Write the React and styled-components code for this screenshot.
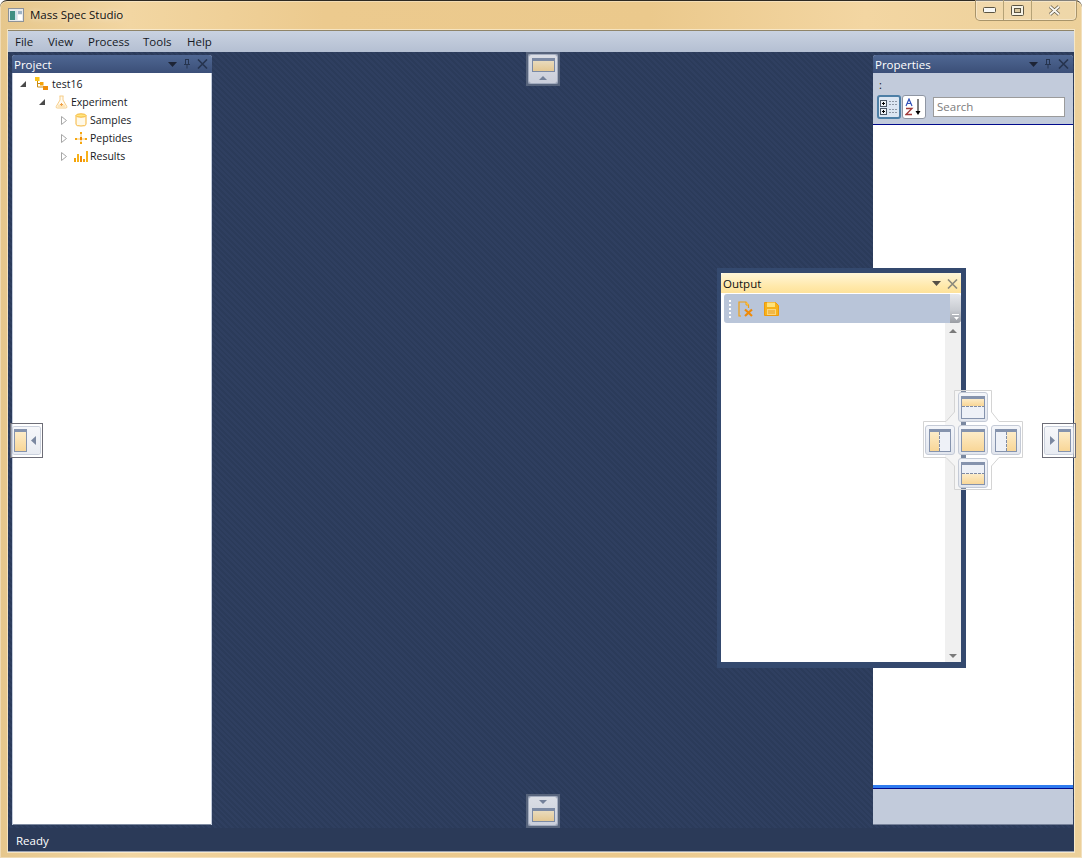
import React from 'react';
import styled, { createGlobalStyle } from 'styled-components';

const GlobalStyle = createGlobalStyle`
  html, body {
    margin: 0;
    padding: 0;
    background: #fff;
    overflow: hidden;
  }
  * { box-sizing: border-box; }
`;

const UI_FONT = `"Open Sans", "Noto Sans", "Liberation Sans", sans-serif`;

// Window chrome
const Window = styled.div`
  width: 1082px;
  height: 858px;
  display: flex;
  flex-direction: column;
  padding: 0 8px 6px;
  border-top: 1px solid #2e2a22;
  border-radius: 7px 7px 0 0;
  background: linear-gradient(90deg, #e6c78c 0%, #f2d6a2 12%, #ecca8e 30%, #ebc98c 60%, #f3d6a2 80%, #ecd09a 100%);
  font-family: ${UI_FONT};
  font-size: 11.5px;
  color: #1a1a1a;
  box-shadow: inset 0 0 0 1px rgba(255, 255, 255, 0.35);
`;

const TitleBar = styled.div`
  height: 29px;
  flex: none;
  display: flex;
  align-items: flex-start;
  justify-content: space-between;
`;

const TitleLeft = styled.div`
  display: flex;
  align-items: center;
  gap: 6px;
  height: 29px;
  padding-bottom: 2px;
`;

const TitleText = styled.span`
  font-size: 11.5px;
  color: #101010;
  text-shadow: 0 0 6px rgba(255, 255, 255, 0.8);
`;

const CaptionGroup = styled.div`
  display: flex;
  height: 21px;
  margin-right: -3px;
  margin-top: -1px;
  border: 1px solid #a8946a;
  border-top: none;
  border-radius: 0 0 5px 5px;
  background: rgba(255, 255, 255, 0.15);
  box-shadow: inset 0 0 0 1px rgba(255, 255, 255, 0.3);
`;

const CaptionButton = styled.div`
  width: ${(props) => props.$w}px;
  display: flex;
  align-items: center;
  justify-content: center;
  border-left: ${(props) => (props.$first ? 'none' : '1px solid #b5a277')};
`;

const Client = styled.div`
  flex: 1;
  min-height: 0;
  display: flex;
  flex-direction: column;
  border-top: 1px solid #8f8468;
  box-shadow: 0 0 0 1px rgba(255, 250, 235, 0.55);
`;

const MenuBar = styled.div`
  height: 21px;
  flex: none;
  display: flex;
  align-items: center;
  padding-left: 7px;
  background: linear-gradient(180deg, #c9d2e1 0%, #b4bfd2 100%);
`;

const MenuItem = styled.span`
  font-size: 11.5px;
  color: #15181f;
  width: ${(props) => props.$w}px;
`;

const DockArea = styled.div`
  position: relative;
  flex: 1;
  min-height: 0;
  display: flex;
  justify-content: space-between;
  padding: 3px 1px 3px 4px;
  background-color: #2b3b5a;
  background-image: repeating-linear-gradient(45deg, #2b3b5a 0, #2b3b5a 2px, #2f3f60 2px, #2f3f60 4px);
`;

const StatusBar = styled.div`
  height: 24px;
  flex: none;
  display: flex;
  align-items: center;
  padding: 2px 0 0 8px;
  background: #2b3a58;
  color: #fff;
  font-size: 11.5px;
  border-bottom: 1px solid #9aa3b4;
`;

// Docked panels
const Panel = styled.section`
  width: 200px;
  display: flex;
  flex-direction: column;
  border-radius: 3px 3px 0 0;
  overflow: hidden;
  background: #c2cbdb;
`;

const PanelHeader = styled.header`
  height: 18px;
  flex: none;
  display: flex;
  align-items: center;
  justify-content: space-between;
  padding: 0 4px 0 2px;
  color: #fff;
  font-size: 11.5px;
  background: linear-gradient(180deg, #4f6793 0%, #3b4f78 100%);
`;

const HeaderTools = styled.div`
  display: flex;
  align-items: center;
  gap: 6px;
`;

const TreeBody = styled.div`
  flex: 1;
  background: #fff;
  margin: 0 1px 0 1px;
  border-bottom: 1px solid #7f8ba1;
  padding-top: 2px;
`;

const TreeRow = styled.div`
  height: 18px;
  display: flex;
  align-items: center;
  padding-left: ${(props) => props.$indent}px;
  font-size: 10.5px;
  color: #16181d;
`;

const Expander = styled.span`
  width: 6px;
  height: 8px;
  display: flex;
  align-items: center;
  margin-right: ${(props) => props.$gap}px;
`;

const TreeIcon = styled.span`
  width: 14px;
  height: 14px;
  display: flex;
  align-items: center;
  justify-content: center;
  margin-right: ${(props) => props.$gap ?? 3}px;
`;

const PropsTop = styled.div`
  height: 52px;
  flex: none;
  padding: 3px 4px 0;
  display: flex;
  flex-direction: column;
  border-bottom: 1px solid #000a8c;
`;

const Colon = styled.div`
  height: 17px;
  padding-left: 2px;
  font-size: 11px;
  color: #111;
  line-height: 17px;
`;

const PropsTools = styled.div`
  display: flex;
  align-items: center;
  margin-top: 2px;
`;

const ToggleButton = styled.div`
  width: 24px;
  height: 24px;
  display: flex;
  align-items: center;
  justify-content: center;
  margin-right: 1px;
  border-radius: 3px;
  background: ${(props) => (props.$active ? '#dce6f2' : '#fff')};
  border: ${(props) => (props.$active ? '2px solid #4d7fa6' : '1px solid #8f96a3')};
`;

const SearchBox = styled.div`
  width: 132px;
  height: 20px;
  margin-left: 6px;
  display: flex;
  align-items: center;
  padding: 0 0 2px 3px;
  background: #fff;
  border: 1px solid #9b9b9b;
  color: #7c7c7c;
  font-size: 11.5px;
`;

const PropsGrid = styled.div`
  flex: 1;
  background: #fff;
`;

const PropsHelp = styled.div`
  height: 40px;
  flex: none;
  border-top: 3px solid #2f7cf0;
  border-bottom: 1px solid #76829a;
  box-shadow: inset 0 1px 0 #000a8c;
  background: #c2cbdb;
`;

// Floating output window
const FloatWindow = styled.div`
  position: absolute;
  left: 709px;
  top: 216px;
  width: 249px;
  height: 400px;
  display: flex;
  flex-direction: column;
  border-style: solid;
  border-color: #34496e;
  border-width: 5px 5px 6px 4px;
  background: #fff;
`;

const FloatHeader = styled.header`
  height: 20px;
  flex: none;
  display: flex;
  align-items: center;
  justify-content: space-between;
  padding: 1px 3px 0 2px;
  font-size: 11.5px;
  color: #111;
  border-radius: 3px 3px 0 0;
  background: linear-gradient(180deg, #fff6d8 0%, #ffe8a8 70%, #fee29a 100%);
`;

const ToolbarRow = styled.div`
  height: 30px;
  flex: none;
  display: flex;
  padding: 1px 0 0 3px;
`;

const OutputToolbar = styled.div`
  flex: 1;
  display: flex;
  align-items: center;
  gap: 10px;
  padding-left: 5px;
  background: #b9c5d9;
  border-radius: 3px 0 0 3px;
`;

const Grip = styled.span`
  width: 2px;
  height: 18px;
  background: repeating-linear-gradient(180deg, #fff 0, #fff 2px, transparent 2px, transparent 4px);
  margin-right: -3px;
`;

const OverflowTab = styled.div`
  width: 11px;
  display: flex;
  align-items: flex-end;
  justify-content: center;
  padding-bottom: 3px;
  border-radius: 0 3px 3px 0;
  background: linear-gradient(180deg, #e6e8ec 0%, #c9ccd2 55%, #9a9da3 100%);
`;

const OutputBody = styled.div`
  flex: 1;
  min-height: 0;
  display: flex;
  justify-content: flex-end;
`;

const ScrollTrack = styled.div`
  width: 16px;
  display: flex;
  flex-direction: column;
  align-items: center;
  justify-content: space-between;
  padding: 6px 0 4px;
  background: #f0f0f0;
`;

// Dock guides
const SideGuide = styled.div`
  position: absolute;
  display: flex;
  align-items: center;
  justify-content: center;
  left: ${(props) => props.$left}px;
  top: ${(props) => props.$top}px;
  width: ${(props) => props.$w}px;
  height: ${(props) => props.$h}px;
  border: ${(props) => (props.$dark ? '2px solid #5c6980' : '1px solid #6d6d77')};
  background: ${(props) => (props.$dark ? '#7d899e' : 'rgba(255, 255, 255, 0.55)')};
  opacity: ${(props) => (props.$dark ? 0.9 : 1)};
`;

const SideFace = styled.div`
  flex: 1;
  align-self: stretch;
  margin: ${(props) => (props.$dark ? '1px' : '3px 2px')};
  display: flex;
  flex-direction: ${(props) => props.$dir};
  align-items: center;
  justify-content: center;
  gap: ${(props) => props.$gap}px;
  padding: ${(props) => props.$pad || 0};
  border-radius: 2px;
  background: ${(props) => (props.$dark
    ? 'linear-gradient(180deg, #eef0f5 0%, #dcdfe9 100%)'
    : 'linear-gradient(180deg, #f6f7fa 0%, #e9ecf2 100%)')};
  box-shadow: 0 0 0 1px rgba(190, 198, 212, 0.8);
`;

const CrossGuide = styled.div`
  position: absolute;
  left: 915px;
  top: 338px;
  width: 100px;
  height: 100px;
  padding: 2px;
  display: grid;
  grid-template-columns: repeat(3, 30px);
  grid-template-rows: repeat(3, 30px);
  gap: 3px;
`;

const CrossOutline = styled.svg`
  position: absolute;
  left: 0;
  top: 0;
`;

const CrossButton = styled.div`
  position: relative;
  grid-column: ${(props) => props.$col};
  grid-row: ${(props) => props.$row};
  display: flex;
  align-items: center;
  justify-content: center;
  border-radius: 3px;
  border: 1px solid #c4cad6;
  background: linear-gradient(180deg, #f4f6fa 0%, #e2e6ee 100%);
`;

// Icons
const GuideIcon = ({ kind, w = 24, h = 23 }) => {
  const id = `fill-${kind}`;
  const head = 3;
  const region = {
    top: { x: 0, y: head, w, h: 7 },
    bottom: { x: 0, y: 12, w, h: h - 12 },
    left: { x: 0, y: head, w: w / 2 - 1, h: h - head },
    right: { x: w / 2 + 1, y: head, w: w / 2 - 1, h: h - head },
  }[kind] || { x: 0, y: head, w, h: h - head };
  return (
    <svg width={w} height={h} viewBox={`0 0 ${w} ${h}`}>
      <defs>
        <linearGradient id={id} x1="0" y1="0" x2="0" y2="1">
          <stop offset="0" stopColor="#fdecc8" />
          <stop offset="1" stopColor="#f8d594" />
        </linearGradient>
      </defs>
      <rect x="0" y="0" width={w} height={h} fill="#eef1f7" />
      <rect x={region.x} y={region.y} width={region.w} height={region.h} fill={`url(#${id})`} />
      <rect x="0" y="0" width={w} height={head} fill="#8593ad" />
      <rect x="0.5" y="0.5" width={w - 1} height={h - 1} fill="none" stroke="#8593ad" />
      {kind === 'top' && <line x1="1" x2={w - 1} y1="10.5" y2="10.5" stroke="#7f8ba3" strokeDasharray="3 1" />}
      {kind === 'bottom' && <line x1="1" x2={w - 1} y1="11.5" y2="11.5" stroke="#7f8ba3" strokeDasharray="3 1" />}
      {kind === 'left' && <line x1={region.w + 0.5} x2={region.w + 0.5} y1={head} y2={h - 1} stroke="#7f8ba3" strokeDasharray="3 1" />}
      {kind === 'right' && <line x1={region.x - 0.5} x2={region.x - 0.5} y1={head} y2={h - 1} stroke="#7f8ba3" strokeDasharray="3 1" />}
    </svg>
  );
};

const Arrow = ({ dir, color = '#7b88a0' }) => {
  const points = {
    up: '0,4 4,0 8,4',
    down: '0,0 8,0 4,4',
    left: '5,0 5,9 0,4.5',
    right: '0,0 0,9 5,4.5',
  }[dir];
  const vertical = dir === 'up' || dir === 'down';
  return (
    <svg width={vertical ? 8 : 5} height={vertical ? 4 : 9}>
      <polygon points={points} fill={color} />
    </svg>
  );
};

const PanelTools = ({ color, closeColor, pin = true }) => (
  <HeaderTools>
    <svg width="9" height="5"><polygon points="0,0 9,0 4.5,5" fill={color} /></svg>
    {pin && (
      <svg width="8" height="10" viewBox="0 0 8 10">
        <path d="M2 0.5h4M2.5 0.5v5M5.5 0.5v5M1 5.5h6M4 5.5v4" stroke={closeColor} fill="none" />
      </svg>
    )}
    <svg width="11" height="10" viewBox="0 0 11 10">
      <path d="M1 0.5L10 9.5M10 0.5L1 9.5" stroke={closeColor} strokeWidth="1.6" fill="none" />
    </svg>
  </HeaderTools>
);

const ExpandedMark = () => (
  <svg width="6" height="6"><polygon points="6,0 6,6 0,6" fill="#4a4a4a" /></svg>
);

const CollapsedMark = () => (
  <svg width="6" height="9"><polygon points="0.5,0.5 5.5,4.5 0.5,8.5" fill="#fff" stroke="#a6a6a6" /></svg>
);

const AppIcon = () => (
  <svg width="16" height="14" viewBox="0 0 16 14">
    <rect x="0.5" y="0.5" width="15" height="13" fill="#e8eaec" stroke="#8d9298" />
    <rect x="2" y="3" width="5" height="9" fill="#3f8f82" />
    <rect x="7" y="3" width="2" height="9" fill="#cfe2ea" />
    <rect x="10" y="3" width="4" height="3" fill="#9fb4c6" />
    <rect x="10" y="7" width="4" height="5" fill="#fff" />
  </svg>
);

const ProjectIcon = () => (
  <svg width="14" height="14" viewBox="0 0 14 14">
    <path d="M2.5 3v7h6M2.5 6.5h4" stroke="#c98a10" fill="none" />
    <rect x="0" y="0" width="4.5" height="4" fill="#fcc419" />
    <rect x="5" y="5" width="3.5" height="3.5" fill="#f5a30a" />
    <rect x="8" y="9" width="5" height="4" fill="#ef8c08" />
  </svg>
);

const FlaskIcon = () => (
  <svg width="13" height="14" viewBox="0 0 13 14">
    <path d="M4.5 1h4M5 1v4L1.2 11.5q-.5 1.5 1 1.5h8.6q1.5 0 1-1.5L8 5V1" fill="#fffaf0" stroke="#f6cd88" />
    <path d="M3.5 9.5h6L11 12.5H2z" fill="#fde6b8" />
    <path d="M6.5 8v3M5 9.5h3" stroke="#eea04a" />
  </svg>
);

const CylinderIcon = () => (
  <svg width="12" height="14" viewBox="0 0 12 14">
    <path d="M1 2.5v9q0 1.5 5 1.5t5-1.5v-9" fill="#fff9e8" stroke="#f5b53a" />
    <ellipse cx="6" cy="2.5" rx="5" ry="1.7" fill="#ffe680" stroke="#f5b53a" />
  </svg>
);

const NodesIcon = () => (
  <svg width="12" height="12" viewBox="0 0 12 12">
    <path d="M6 1v10M1 7h10" stroke="#f8c66a" />
    <rect x="5" y="0" width="2" height="2" fill="#f7a70f" />
    <rect x="0" y="6" width="2" height="2" fill="#f7a70f" />
    <rect x="10" y="6" width="2" height="2" fill="#f7a70f" />
    <rect x="5" y="10" width="2" height="2" fill="#f7a70f" />
    <rect x="5" y="5" width="2" height="3" fill="#ef8c08" />
  </svg>
);

const BarsIcon = () => (
  <svg width="14" height="11" viewBox="0 0 14 11">
    <rect x="0" y="7" width="2" height="4" fill="#f5a30a" />
    <rect x="3" y="3" width="2" height="8" fill="#f7b21a" />
    <rect x="6" y="5" width="2" height="6" fill="#ef8c08" />
    <rect x="9" y="8" width="2" height="3" fill="#f5a30a" />
    <rect x="12" y="0" width="2" height="11" fill="#f7b21a" />
  </svg>
);

const CategorizedIcon = () => (
  <svg width="18" height="17" viewBox="0 0 18 17">
    <rect x="0.5" y="1.5" width="6" height="6" fill="#eef2f6" stroke="#4a5664" />
    <path d="M2 4.5h3M3.5 3v3" stroke="#000" />
    <rect x="0.5" y="9.5" width="6" height="6" fill="#eef2f6" stroke="#4a5664" />
    <path d="M2 12.5h3M3.5 11v3" stroke="#000" />
    <path d="M9 2.5h8M9 5.5h8M9 10.5h8M9 13.5h8" stroke="#8d97a5" strokeDasharray="2 1" />
  </svg>
);

const SortAzIcon = () => (
  <svg width="18" height="18" viewBox="0 0 18 18">
    <path d="M1 8L4 1l3 7M2.2 5.5h3.6" stroke="#2f4fb8" fill="none" strokeWidth="1.2" />
    <path d="M1 10.5h6L1 16.5h6" stroke="#a23a3a" fill="none" strokeWidth="1.3" />
    <path d="M13 1v14" stroke="#000" />
    <polygon points="10.5,13 15.5,13 13,17" fill="#000" />
  </svg>
);

const ClearDocIcon = () => (
  <svg width="16" height="16" viewBox="0 0 16 16">
    <path d="M3 15H1V1h7l2.5 3v3" fill="none" stroke="#f0a012" strokeWidth="1.2" />
    <path d="M8 1v3h3" fill="#ffd86a" stroke="#f0a012" />
    <path d="M7 8.5l7 6.5M14 8.5l-7 6.5" stroke="#ee8a0a" strokeWidth="2.2" />
  </svg>
);

const SaveIcon = () => (
  <svg width="15" height="14" viewBox="0 0 15 14">
    <path d="M0.5 0.5h11l3 3v10h-14z" fill="#f7b21a" stroke="#ee9a0c" />
    <rect x="3" y="0.5" width="8" height="4.5" fill="#ffe27a" />
    <rect x="3" y="7" width="9" height="6" fill="#fbd67c" />
    <path d="M4 9h7M4 11h7" stroke="#e89a14" />
  </svg>
);

const CaptionIcons = {
  min: (
    <svg width="13" height="6"><rect x="0.5" y="0.5" width="12" height="5" rx="1" fill="#f7f7f4" stroke="#5b5443" /></svg>
  ),
  max: (
    <svg width="13" height="11">
      <rect x="0.5" y="0.5" width="12" height="10" rx="1" fill="#f7f3e6" stroke="#5b5443" />
      <rect x="3.5" y="3.5" width="6" height="4" fill="#d8c69e" stroke="#5b5443" />
    </svg>
  ),
  close: (
    <svg width="13" height="11" viewBox="0 0 13 11">
      <path d="M2 1.5L11 9.5M11 1.5L2 9.5" stroke="#5b5443" strokeWidth="3.4" />
      <path d="M2 1.5L11 9.5M11 1.5L2 9.5" stroke="#f8f6f0" strokeWidth="2" />
    </svg>
  ),
};

const menus = [
  { label: 'File', w: 33 },
  { label: 'View', w: 40 },
  { label: 'Process', w: 55 },
  { label: 'Tools', w: 44 },
  { label: 'Help', w: 30 },
];

const tree = [
  { label: 'test16', indent: 7, open: true, markGap: 9, icon: <ProjectIcon />, iconGap: 3 },
  { label: 'Experiment', indent: 26, open: true, markGap: 9, icon: <FlaskIcon />, iconGap: 3 },
  { label: 'Samples', indent: 48, open: false, markGap: 7, icon: <CylinderIcon />, iconGap: 2 },
  { label: 'Peptides', indent: 48, open: false, markGap: 7, icon: <NodesIcon />, iconGap: 2 },
  { label: 'Results', indent: 48, open: false, markGap: 7, icon: <BarsIcon />, iconGap: 2 },
];

const crossButtons = [
  { kind: 'top', col: 2, row: 1 },
  { kind: 'left', col: 1, row: 2, w: 22 },
  { kind: 'center', col: 2, row: 2 },
  { kind: 'right', col: 3, row: 2, w: 22 },
  { kind: 'bottom', col: 2, row: 3 },
];

export default function App() {
  return (
    <>
      <GlobalStyle />
      <Window>
        <TitleBar>
          <TitleLeft>
            <AppIcon />
            <TitleText>Mass Spec Studio</TitleText>
          </TitleLeft>
          <CaptionGroup>
            <CaptionButton $w={27} $first>{CaptionIcons.min}</CaptionButton>
            <CaptionButton $w={28}>{CaptionIcons.max}</CaptionButton>
            <CaptionButton $w={45}>{CaptionIcons.close}</CaptionButton>
          </CaptionGroup>
        </TitleBar>
        <Client>
          <MenuBar>
            {menus.map((menu) => (
              <MenuItem key={menu.label} $w={menu.w}>{menu.label}</MenuItem>
            ))}
          </MenuBar>
          <DockArea>
            <Panel>
              <PanelHeader>
                Project
                <PanelTools color="#1d2436" closeColor="#26344f" />
              </PanelHeader>
              <TreeBody>
                {tree.map((node) => (
                  <TreeRow key={node.label} $indent={node.indent}>
                    <Expander $gap={node.markGap}>
                      {node.open ? <ExpandedMark /> : <CollapsedMark />}
                    </Expander>
                    <TreeIcon $gap={node.iconGap}>{node.icon}</TreeIcon>
                    {node.label}
                  </TreeRow>
                ))}
              </TreeBody>
            </Panel>
            <Panel>
              <PanelHeader>
                Properties
                <PanelTools color="#1d2436" closeColor="#26344f" />
              </PanelHeader>
              <PropsTop>
                <Colon>:</Colon>
                <PropsTools>
                  <ToggleButton $active><CategorizedIcon /></ToggleButton>
                  <ToggleButton><SortAzIcon /></ToggleButton>
                  <SearchBox>Search</SearchBox>
                </PropsTools>
              </PropsTop>
              <PropsGrid />
              <PropsHelp />
            </Panel>

            <FloatWindow>
              <FloatHeader>
                Output
                <PanelTools color="#555046" closeColor="#8d8a7c" pin={false} />
              </FloatHeader>
              <ToolbarRow>
                <OutputToolbar>
                  <Grip />
                  <ClearDocIcon />
                  <SaveIcon />
                </OutputToolbar>
                <OverflowTab>
                  <svg width="8" height="6"><path d="M0 0.5h7" stroke="#fff" /><polygon points="2,3 7,3 4.5,6" fill="#fff" /></svg>
                </OverflowTab>
              </ToolbarRow>
              <OutputBody>
                <ScrollTrack>
                  <Arrow dir="up" color="#7a7a7a" />
                  <Arrow dir="down" color="#7a7a7a" />
                </ScrollTrack>
              </OutputBody>
            </FloatWindow>

            <SideGuide $left={518} $top={0} $w={34} $h={34} $dark>
              <SideFace $dark $dir="column" $gap={4}>
                <GuideIcon kind="sideTop" w={23} h={14} />
                <Arrow dir="up" />
              </SideFace>
            </SideGuide>
            <SideGuide $left={518} $top={742} $w={34} $h={34} $dark>
              <SideFace $dark $dir="column" $gap={4}>
                <Arrow dir="down" />
                <GuideIcon kind="sideBottom" w={23} h={14} />
              </SideFace>
            </SideGuide>
            <SideGuide $left={2} $top={371} $w={33} $h={35}>
              <SideFace $dir="row" $gap={4} $pad="0 3px 0 0">
                <GuideIcon kind="sideLeft" w={13} h={23} />
                <Arrow dir="left" />
              </SideFace>
            </SideGuide>
            <SideGuide $left={1034} $top={371} $w={34} $h={35}>
              <SideFace $dir="row" $gap={3} $pad="0 0 0 2px">
                <Arrow dir="right" />
                <GuideIcon kind="sideRight" w={13} h={23} />
              </SideFace>
            </SideGuide>

            <CrossGuide>
              <CrossOutline width="100" height="100" viewBox="0 0 100 100">
                <polygon
                  points="31.5,0.5 68.5,0.5 68.5,22 76,31.5 99.5,31.5 99.5,67.5 76,67.5 68.5,76 68.5,99.5 31.5,99.5 31.5,76 23,67.5 0.5,67.5 0.5,31.5 23,31.5 31.5,22"
                  fill="rgba(255,255,255,0.35)"
                  stroke="#d4d4d4"
                />
              </CrossOutline>
              {crossButtons.map((btn) => (
                <CrossButton key={btn.kind} $col={btn.col} $row={btn.row}>
                  <GuideIcon kind={btn.kind} w={btn.w} />
                </CrossButton>
              ))}
            </CrossGuide>
          </DockArea>
          <StatusBar>Ready</StatusBar>
        </Client>
      </Window>
    </>
  );
}
